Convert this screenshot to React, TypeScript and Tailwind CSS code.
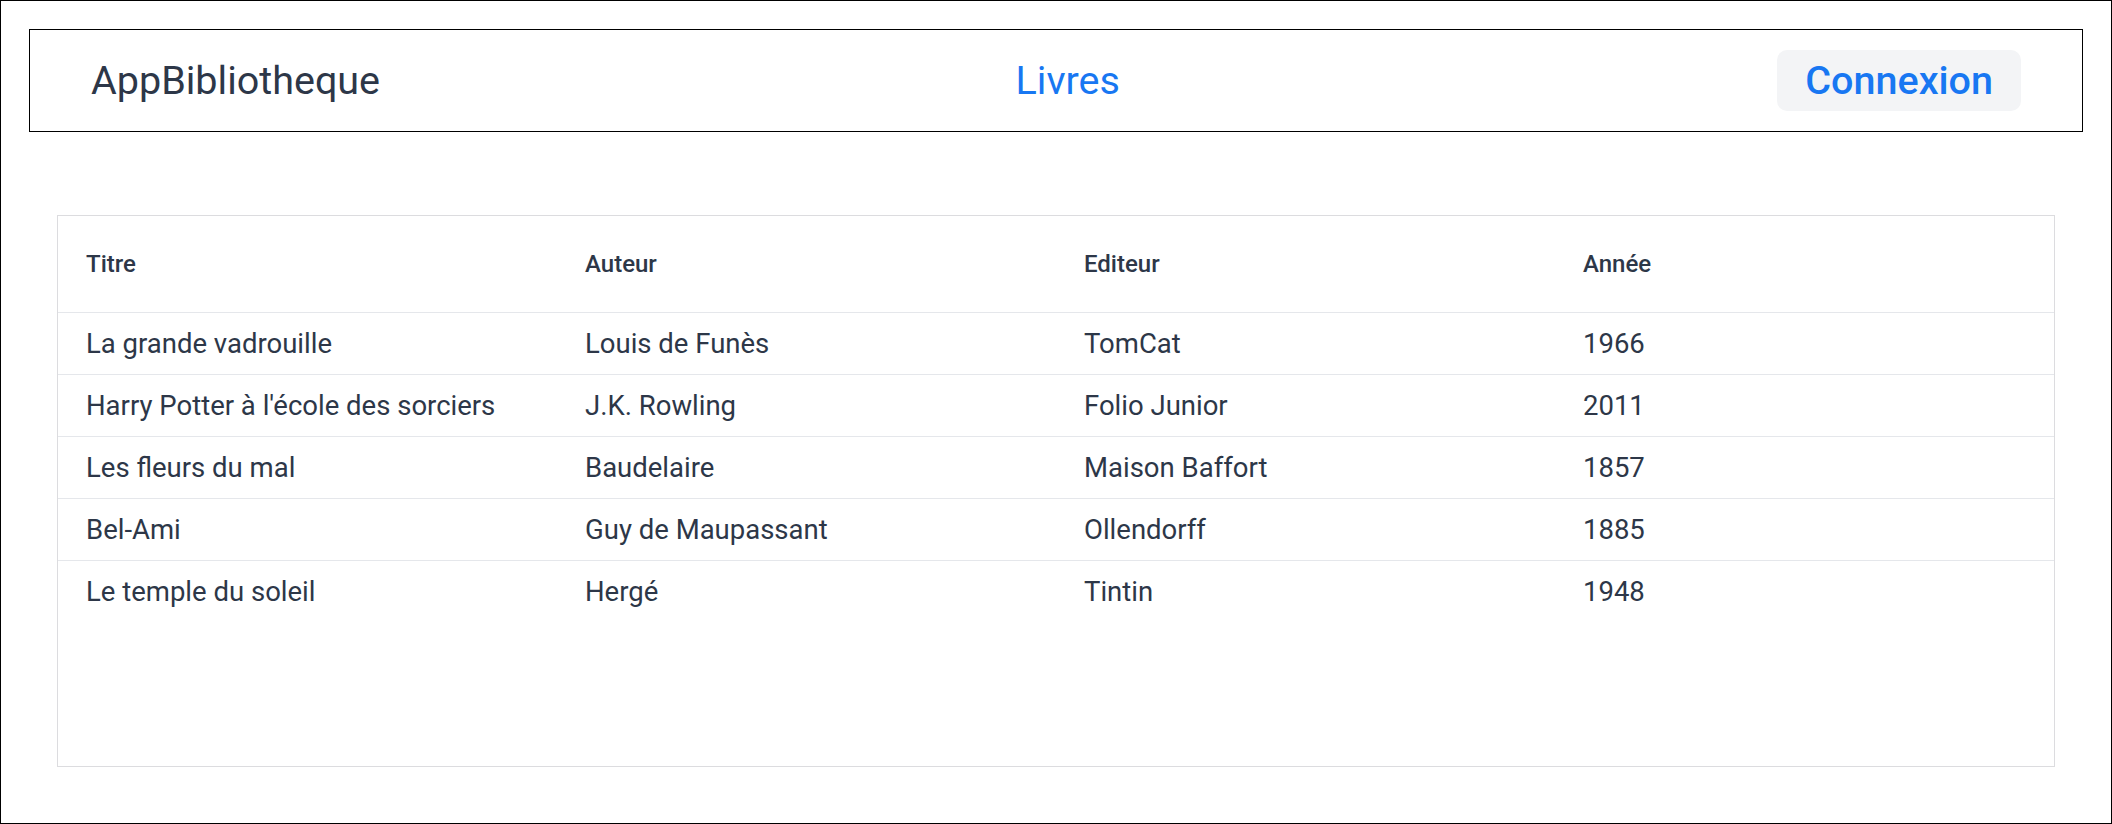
const BOOKS = [
  { titre: "La grande vadrouille", auteur: "Louis de Funès", editeur: "TomCat", annee: 1966 },
  { titre: "Harry Potter à l'école des sorciers", auteur: "J.K. Rowling", editeur: "Folio Junior", annee: 2011 },
  { titre: "Les fleurs du mal", auteur: "Baudelaire", editeur: "Maison Baffort", annee: 1857 },
  { titre: "Bel-Ami", auteur: "Guy de Maupassant", editeur: "Ollendorff", annee: 1885 },
  { titre: "Le temple du soleil", auteur: "Hergé", editeur: "Tintin", annee: 1948 },
]

const COLUMNS = ["Titre", "Auteur", "Editeur", "Année"]

function NavBar() {
  return (
    <nav className="flex h-[103px] items-center justify-between border border-black px-[61px]">
      <a href="#" className="text-[39.5px] leading-none text-[#2d3748]">
        AppBibliotheque
      </a>
      <a href="#" className="mr-[22px] text-[39.5px] leading-none text-[#1877f2]">
        Livres
      </a>
      <button className="flex h-[61px] items-center rounded-[10px] bg-gray-100 px-[28px] text-[39.5px] font-medium leading-none text-[#1877f2]">
        Connexion
      </button>
    </nav>
  )
}

function BooksTable() {
  return (
    <div className="mx-[28px] mt-[83px] h-[552px] border border-[#dcdcdf]">
      <table className="w-full table-fixed border-separate border-spacing-0">
        <thead>
          <tr>
            {COLUMNS.map((col) => (
              <th
                key={col}
                className="py-[36px] pl-[28px] text-left text-[24px] font-medium leading-6 text-[#2d3748]"
              >
                {col}
              </th>
            ))}
          </tr>
        </thead>
        <tbody>
          {BOOKS.map((book) => (
            <tr key={book.titre}>
              {[book.titre, book.auteur, book.editeur, book.annee].map((value, i) => (
                <td
                  key={i}
                  className="border-t border-gray-200 py-0 pl-[28px] text-[27.5px] leading-[61px] whitespace-nowrap text-[#2d3748]"
                >
                  {value}
                </td>
              ))}
            </tr>
          ))}
        </tbody>
      </table>
    </div>
  )
}

export default function App() {
  return (
    <div
      className="h-screen border border-black bg-white p-[28px]"
      style={{ fontFamily: "Roboto, 'Noto Sans', sans-serif" }}
    >
      <NavBar />
      <BooksTable />
    </div>
  )
}
